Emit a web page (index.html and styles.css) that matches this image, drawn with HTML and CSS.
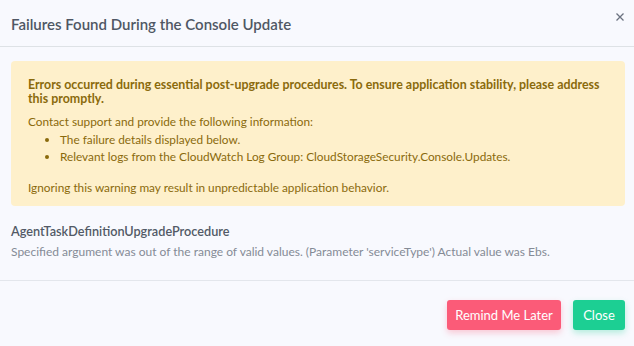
FILE: index.html
```html
<!DOCTYPE html>
<html lang="en">
<head>
    <meta charset="UTF-8">
    <meta name="viewport" content="width=device-width, initial-scale=1.0">
    <title>Failures Found During the Console Update</title>
    <link rel="stylesheet" href="styles.css">
</head>
<body>
    <div class="modal">
        <div class="modal-header">
            <h5 class="modal-title">Failures Found During the Console Update</h5>
            <button class="close" aria-label="Close">
                <svg width="8" height="8" viewBox="0 0 8 8">
                    <path d="M0.5 0.5 L7.5 7.5 M7.5 0.5 L0.5 7.5" stroke="#6b7280" stroke-width="1.3" fill="none"/>
                </svg>
            </button>
        </div>
        <div class="modal-body">
            <div class="alert">
                <p class="alert-title">Errors occurred during essential post-upgrade procedures. To ensure application stability, please address this promptly.</p>
                <p class="alert-text">Contact support and provide the following information:</p>
                <ul class="alert-list">
                    <li>The failure details displayed below.</li>
                    <li>Relevant logs from the CloudWatch Log Group: CloudStorageSecurity.Console.Updates.</li>
                </ul>
                <p class="alert-text">Ignoring this warning may result in unpredictable application behavior.</p>
            </div>
            <div class="failure">
                <h6 class="failure-name">AgentTaskDefinitionUpgradeProcedure</h6>
                <p class="failure-message">Specified argument was out of the range of valid values. (Parameter 'serviceType') Actual value was Ebs.</p>
            </div>
        </div>
        <div class="modal-footer">
            <button class="btn btn-danger">Remind Me Later</button>
            <button class="btn btn-success">Close</button>
        </div>
    </div>
</body>
</html>
```

FILE: styles.css
```css
body {
    margin: 0;
    font-family: Lato, "Open Sans", sans-serif;
    background-color: #f8f9fe;
}
.modal {
    width: 634px;
    height: 346px;
    background-color: #f8f9fe;
}
.modal-header {
    display: flex;
    justify-content: space-between;
    align-items: flex-start;
    height: 46px;
    padding: 0 9px 0 11px;
    border-bottom: 1px solid #dee2e6;
}
.modal-title {
    margin: 15px 0 0;
    font-size: 15px;
    font-weight: 600;
    color: #4f5764;
}
.close {
    margin: 9px 0 0;
    padding: 0;
    width: 10px;
    height: 10px;
    border: none;
    background: none;
    cursor: pointer;
}
.modal-body {
    padding: 14px 9px 0 11px;
    height: 219px;
    border-bottom: 1px solid #e3e6ec;
}
.alert {
    background-color: #fef0cb;
    border-radius: 4px;
    padding: 17px 17px 10px;
    color: #8a6a0c;
    font-size: 11.8px;
}
.alert-title {
    margin: 0 0 7px;
    font-size: 12.4px;
    font-weight: 700;
    line-height: 14px;
}
.alert-text {
    margin: 0;
    line-height: 17px;
}
.alert-list {
    margin: 1px 0 14px;
    padding-left: 32px;
    line-height: 17px;
}
.failure {
    padding-top: 17px;
}
.failure-name {
    margin: 0 0 5px;
    font-size: 12.7px;
    font-weight: 600;
    color: #525a66;
}
.failure-message {
    margin: 0;
    font-size: 12px;
    color: #858b96;
}
.modal-footer {
    display: flex;
    justify-content: flex-end;
    gap: 12px;
    padding: 19px 9px 0 11px;
}
.btn {
    height: 30px;
    padding: 0;
    border: none;
    border-radius: 3px;
    color: #fff;
    font-family: inherit;
    font-size: 13px;
    white-space: nowrap;
    cursor: pointer;
}
.btn-danger {
    width: 114px;
    background-color: #fb5b78;
    box-shadow: 0 3px 6px rgba(251, 91, 120, 0.3);
}
.btn-success {
    width: 52px;
    background-color: #1ccf93;
    box-shadow: 0 3px 6px rgba(28, 207, 147, 0.3);
}
```
